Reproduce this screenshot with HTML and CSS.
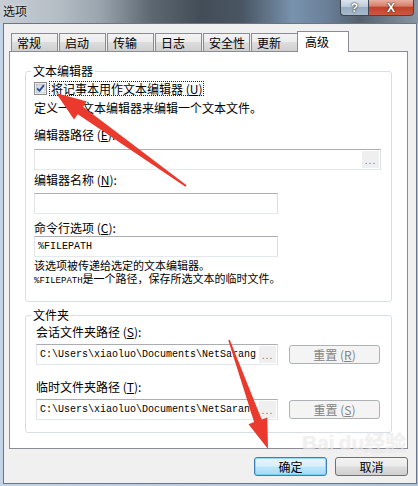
FILE: index.html
```html
<!DOCTYPE html>
<html lang="zh-CN">
<head>
<meta charset="utf-8">
<title>选项</title>
<link rel="stylesheet" href="styles.css">
</head>
<body>
<div class="window">
  <div class="titlebar">
    <span class="title">选项</span>
    <div class="caption">
      <div class="cap help">?</div>
      <div class="cap close">X</div>
    </div>
  </div>
  <div class="client">
    <div class="tabs">
      <div class="tab">常规</div>
      <div class="tab">启动</div>
      <div class="tab">传输</div>
      <div class="tab">日志</div>
      <div class="tab">安全性</div>
      <div class="tab last">更新</div>
      <div class="tab sel">高级</div>
    </div>
    <div class="panel">
      <div class="group g1">
        <div class="legend">文本编辑器</div>
        <div class="check-row">
          <span class="checkbox">
            <svg width="13" height="13" viewBox="0 0 13 13">
              <defs>
                <linearGradient id="cbg" x1="0" y1="0" x2="1" y2="1">
                  <stop offset="0" stop-color="#cbcfd5"/>
                  <stop offset="1" stop-color="#f6f6f6"/>
                </linearGradient>
              </defs>
              <rect x="0.5" y="0.5" width="12" height="12" fill="#fff" stroke="#8e8f8f"/>
              <rect x="2" y="2" width="9" height="9" fill="url(#cbg)" stroke="#a9acb2" stroke-width="0.6"/>
              <path d="M3.2 6.4 L5.4 8.8 L9.9 3.2" fill="none" stroke="#2d4f96" stroke-width="1.9" stroke-linejoin="round"/>
            </svg>
          </span>
          <span class="check-label">将记事本用作文本编辑器 (<u>U</u>)</span>
        </div>
        <div class="text desc">定义一个文本编辑器来编辑一个文本文件。</div>
        <div class="text lbl-path">编辑器路径 (<u>E</u>):</div>
        <div class="input wide"><span class="val"></span><span class="dots">...</span></div>
        <div class="text lbl-name">编辑器名称 (<u>N</u>):</div>
        <div class="input mid name"></div>
        <div class="text lbl-cmd">命令行选项 (<u>C</u>):</div>
        <div class="input mid cmd"><span class="val mono">%FILEPATH</span></div>
        <div class="note first">该选项被传递给选定的文本编辑器。</div>
        <div class="note"><span class="mono small">%FILEPATH</span>是一个路径，保存所选文本的临时文件。</div>
      </div>
      <div class="group g2">
        <div class="legend">文件夹</div>
        <div class="text lbl-s">会话文件夹路径 (<u>S</u>):</div>
        <div class="path-row first">
          <div class="input path"><span class="val mono">C:\Users\xiaoluo\Documents\NetSarang</span><span class="dots">...</span></div>
          <div class="reset">重置 (<u>R</u>)</div>
        </div>
        <div class="text lbl-t">临时文件夹路径 (<u>T</u>):</div>
        <div class="path-row second">
          <div class="input path"><span class="val mono">C:\Users\xiaoluo\Documents\NetSarang</span><span class="dots">...</span></div>
          <div class="reset">重置 (<u>S</u>)</div>
        </div>
      </div>
    </div>
    <div class="buttons">
      <div class="btn default">确定</div>
      <div class="btn">取消</div>
    </div>
  </div>
  <div class="watermark">Bai<span class="wm-du">du</span>经验</div>
  <svg class="arrows" width="418" height="486" viewBox="0 0 418 486">
    <polygon fill="#ea3a2e" points="56,93 86.8,101.5 83,106.8 186.6,185.2 185.4,186.8 77.8,114.2 74,119.4"/>
    <polygon fill="#ea3a2e" points="268,449 267.3,417.4 261.7,419.4 229.75,339.7 228.25,340.3 254.1,422.1 248.5,424.2"/>
  </svg>
</div>
</body>
</html>
```

FILE: styles.css
```css
* { box-sizing: border-box; }

html, body {
  margin: 0;
  padding: 0;
}

body {
  width: 418px;
  height: 486px;
  overflow: hidden;
  font-family: "Noto Sans CJK SC", "Noto Sans", sans-serif;
  font-size: 12px;
  color: #000;
}

.window {
  position: relative;
  width: 418px;
  height: 486px;
  background: linear-gradient(90deg, #c3d4e6 0%, #b8cbe0 50%, #aec3d9 100%);
  overflow: hidden;
}

.titlebar {
  height: 23px;
  display: flex;
  align-items: flex-start;
  background: linear-gradient(90deg, #c7ced5 0%, #b4bcc4 14%, #9aa4ae 24%, #5e6872 36%, #434d58 48%, #4a5663 58%, #7892ad 70%, #6b8099 78%, #55616e 86%, #8896a4 100%);
}

.title {
  padding-left: 3px;
  line-height: 22px;
  font-size: 12px;
  color: #111;
  text-shadow: 0 0 4px rgba(255, 255, 255, 0.7);
}

.caption {
  margin-left: auto;
  margin-right: 4px;
  display: flex;
}

.cap {
  height: 16px;
  border: 1px solid #3e4752;
  border-top: none;
  display: flex;
  align-items: center;
  justify-content: center;
  font-family: "Liberation Sans", sans-serif;
  font-weight: bold;
  color: #fff;
  text-shadow: 0 0 1px #222, 0 0 2px #333;
}

.help {
  width: 28px;
  border-radius: 0 0 0 4px;
  border-right: none;
  font-size: 12px;
  background: linear-gradient(#dbe3ec 0%, #bccbdb 45%, #98acc1 50%, #a7bacd 100%);
}

.close {
  width: 46px;
  border-radius: 0 0 4px 0;
  font-size: 12px;
  background: linear-gradient(#e9b0a3 0%, #d7806b 40%, #c2412a 50%, #cc5840 100%);
}

.client {
  margin-left: 3px;
  width: 414px;
  height: 461px;
  border: 1px solid #6c7682;
  background: #f0f0f0;
}

.tabs {
  display: flex;
  align-items: flex-end;
  height: 20px;
  margin: 7px 0 0 7px;
}

.tab {
  width: 47px;
  height: 18px;
  margin-right: 1px;
  padding-left: 5px;
  border: 1px solid #898c95;
  border-bottom: none;
  background: linear-gradient(#f3f3f3 0%, #ebebeb 50%, #dddddd 50%, #cfcfcf 100%);
  line-height: 17px;
  font-size: 12px;
}

.tab.last { margin-right: 0; }

.tab.sel {
  position: relative;
  z-index: 1;
  width: 52px;
  height: 21px;
  margin-left: -1px;
  margin-bottom: -1px;
  padding-left: 7px;
  background: #fff;
  line-height: 19px;
}

.panel {
  margin-left: 5px;
  width: 399px;
  height: 398px;
  border: 1px solid #898c95;
  background: #fff;
  overflow: hidden;
}

.group {
  width: 367px;
  border: 1px solid #d5dfe5;
  border-radius: 3px;
  margin-left: 15px;
}

.g1 {
  margin-top: 19px;
  height: 231px;
  padding: 0 10px 0 8px;
}

.g2 {
  margin-top: 13px;
  height: 118px;
  padding: 0 10px 0 10px;
}

.legend {
  width: fit-content;
  margin-top: -8px;
  padding: 0 2px;
  background: #fff;
  line-height: 14px;
}

.g1 .legend { margin-left: -3px; }
.g2 .legend { margin-left: -5px; }

.text { line-height: 14px; white-space: nowrap; }

.check-row {
  margin-top: 3px;
  height: 15px;
  display: flex;
  align-items: center;
}

.checkbox {
  width: 13px;
  height: 13px;
  display: block;
}

.checkbox svg { display: block; }

.check-label {
  margin-left: 2px;
  border: 1px dotted #222;
  padding: 0 1px;
  line-height: 13px;
  white-space: nowrap;
}

.desc { margin-top: 5px; }
.lbl-path { margin-top: 13px; }
.lbl-name { margin-top: 3px; }
.lbl-cmd { margin-top: 7px; }
.lbl-s { margin-top: 3px; }
.lbl-t { margin-top: 15px; }

.input {
  height: 21px;
  border: 1px solid #abadb3;
  border-right-color: #dbdfe6;
  border-bottom-color: #e3e9ef;
  border-left-color: #e2e3ea;
  background: #fff;
  display: flex;
  align-items: center;
}

.wide { width: 347px; margin-top: 7px; }
.mid { width: 244px; }
.name { margin-top: 6px; }
.cmd { margin-top: 1px; }

.val {
  flex: 1;
  min-width: 0;
  overflow: hidden;
  white-space: nowrap;
  padding-left: 3px;
}

.mono {
  font-family: "Liberation Mono", monospace;
  font-size: 10px;
  letter-spacing: 0;
}

.mono.small { font-size: 9px; }

.dots {
  width: 17px;
  height: 17px;
  margin-right: 1px;
  background: #efefef;
  color: #6d6d6d;
  font-family: "Liberation Sans", sans-serif;
  font-size: 10px;
  line-height: 20px;
  letter-spacing: 1px;
  text-align: center;
  overflow: hidden;
}

.note {
  font-size: 11px;
  line-height: 13px;
  white-space: nowrap;
}

.note.first { margin-top: 2px; }

.path-row {
  margin-top: 5px;
  display: flex;
  align-items: center;
  gap: 11px;
}

.path { width: 242px; }

.reset {
  width: 91px;
  height: 19px;
  border: 1px solid #adb2b5;
  border-radius: 3px;
  background: #f4f4f4;
  color: #838383;
  text-align: center;
  line-height: 17px;
}

.buttons {
  margin-top: 8px;
  padding-right: 8px;
  display: flex;
  justify-content: flex-end;
  gap: 8px;
}

.btn {
  width: 73px;
  height: 19px;
  border: 1px solid #707070;
  border-radius: 3px;
  background: linear-gradient(#f2f2f2 0%, #ebebeb 48%, #dddddd 52%, #cfcfcf 100%);
  text-align: center;
  line-height: 17px;
}

.btn.default {
  border-color: #3c7fb1;
  background: linear-gradient(#e8f5fc 0%, #d9effb 48%, #bee6fd 52%, #a7d9f5 100%);
  box-shadow: inset 0 0 0 1px rgba(72, 200, 245, 0.55);
}

.watermark {
  position: absolute;
  left: 302px;
  top: 431px;
  pointer-events: none;
  font-family: "Liberation Sans", "Noto Sans CJK SC", sans-serif;
  font-weight: bold;
  font-size: 21px;
  line-height: 24px;
  color: rgba(250, 250, 250, 0.5);
  text-shadow: 0 0 1px rgba(170, 170, 170, 0.3);
}

.wm-du { margin-left: 4px; }

.arrows {
  position: absolute;
  left: 0;
  top: 0;
  pointer-events: none;
}
```
